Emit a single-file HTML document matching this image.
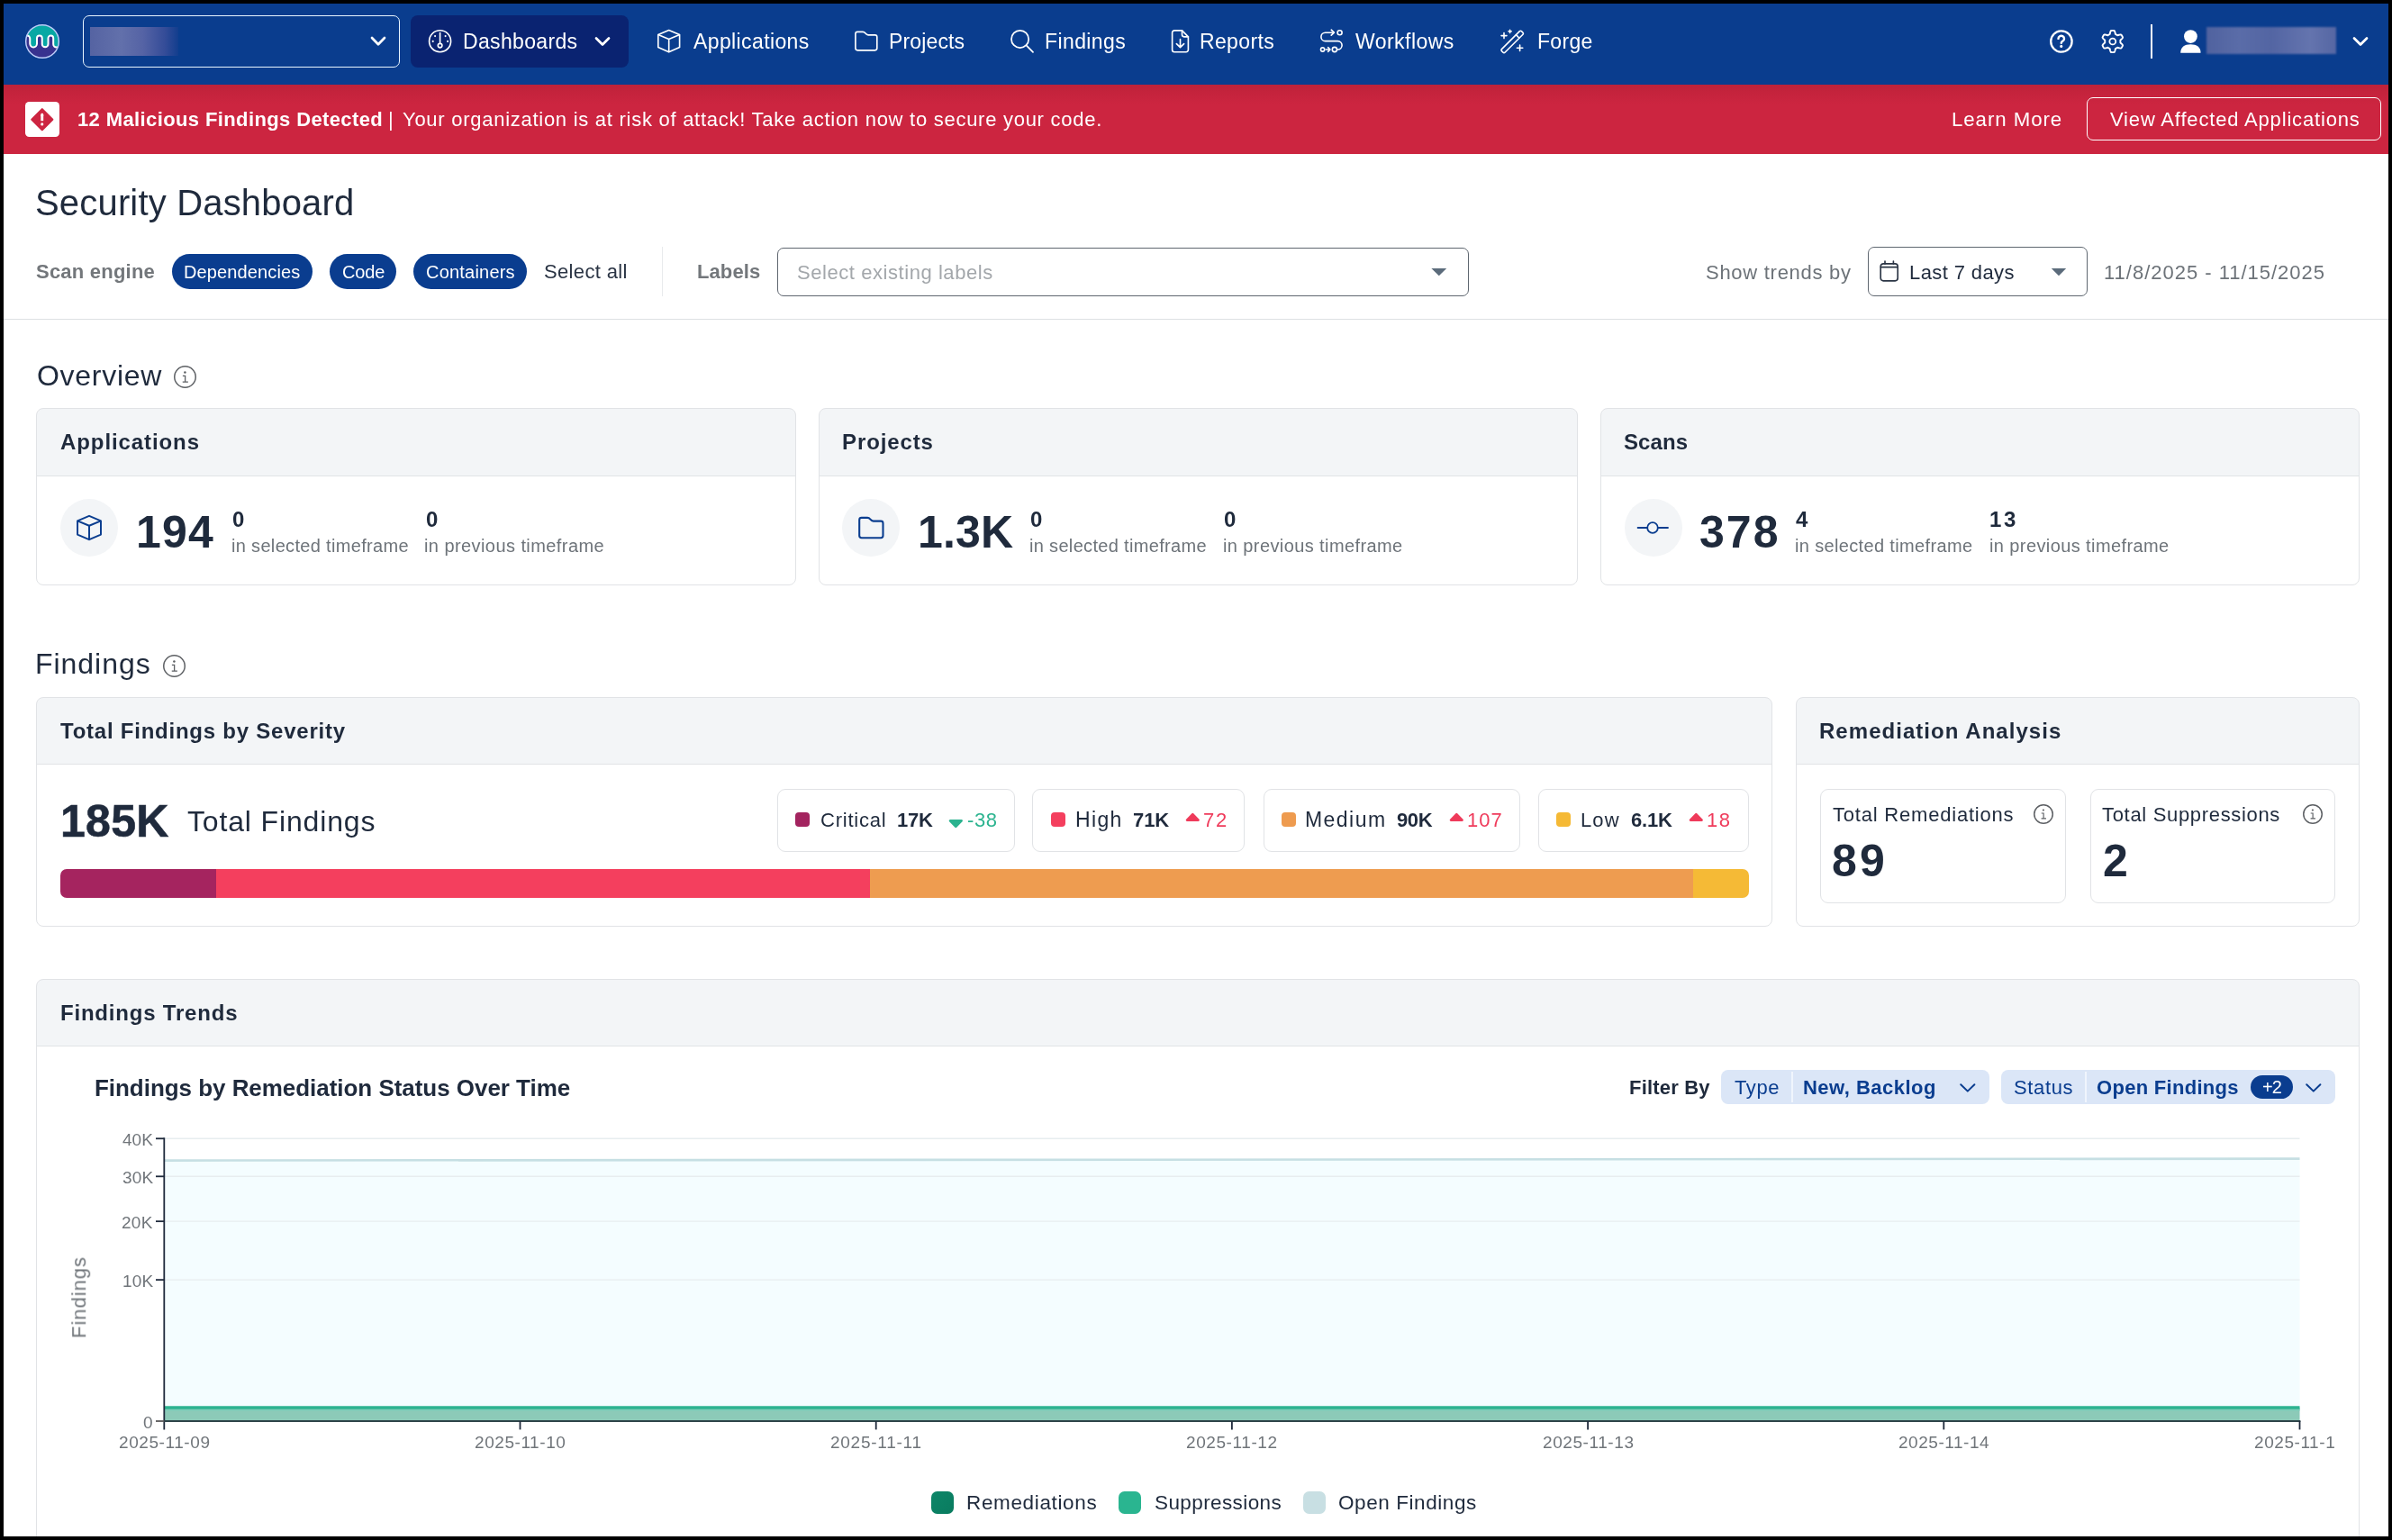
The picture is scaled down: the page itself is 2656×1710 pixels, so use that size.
<!DOCTYPE html>
<html><head><meta charset="utf-8"><title>Security Dashboard</title>
<style>
html,body{margin:0;padding:0;background:#000;}
body{width:2656px;height:1710px;overflow:hidden;position:relative;font-family:"Liberation Sans",sans-serif;}
#page{position:absolute;left:0;top:0;width:2656px;height:1710px;background:#fff;overflow:hidden;}
#frame{position:absolute;left:0;top:0;width:2656px;height:1710px;box-sizing:border-box;border:4px solid #000;z-index:50;pointer-events:none;}
.t{position:absolute;white-space:nowrap;}
.t{will-change:transform;}
.b{position:absolute;box-sizing:border-box;}
</style></head><body><div id="page">
<div class="b" style="left:0px;top:0px;width:2656px;height:94px;background:#0a3d8e;"></div>
<svg class="b" style="left:27px;top:26px;" width="40" height="40" viewBox="0 0 40 40">
<defs><clipPath id="lc"><circle cx="20" cy="20" r="18.4"/></clipPath></defs>
<circle cx="20" cy="20" r="18.4" fill="#07a8a4"/>
<g clip-path="url(#lc)">
<path id="wv" d="M-2 13.5 H3 a3.25 3.25 0 0 1 3.25 3.25 V22.6 a3.875 3.875 0 0 0 7.75 0 V16.4 a2.875 2.875 0 0 1 5.75 0 V22.9 a3.375 3.375 0 0 0 6.75 0 V16.4 a2.85 2.85 0 0 1 5.7 0 V23 a3.5 3.5 0 0 0 3.5 3.5 H42 V42 H-2 Z" fill="#38328f"/>
<path d="M-2 13.5 H3 a3.25 3.25 0 0 1 3.25 3.25 V22.6 a3.875 3.875 0 0 0 7.75 0 V16.4 a2.875 2.875 0 0 1 5.75 0 V22.9 a3.375 3.375 0 0 0 6.75 0 V16.4 a2.85 2.85 0 0 1 5.7 0 V23 a3.5 3.5 0 0 0 3.5 3.5 H42" fill="none" stroke="#fff" stroke-width="2" stroke-linecap="round"/>
</g>
<circle cx="20" cy="20" r="18.3" fill="none" stroke="#bccaf7" stroke-width="1.5"/>
</svg>
<div class="b" style="left:92px;top:17px;width:352px;height:58px;border:1.6px solid #e9f6ff;border-radius:7px;"></div>
<div class="b" style="left:100px;top:30px;width:98px;height:32px;background:linear-gradient(90deg,#5563a2 0%,#6270ab 35%,#5563a5 60%,#344c98 85%,#123e8e 100%);filter:blur(0.7px);"></div>
<svg class="b" style="left:410px;top:39px;" width="20" height="15" viewBox="0 0 20 15"><path d="M3 3 L10 10.2 L17 3" fill="none" stroke="#fff" stroke-width="2.7" stroke-linecap="round" stroke-linejoin="round"/></svg>
<div class="b" style="left:456px;top:17px;width:242px;height:58px;background:#0a2371;border-radius:8px;"></div>
<svg class="b" style="left:474px;top:31px;" width="30" height="30" viewBox="0 0 30 30"><g fill="none" stroke="#fff" stroke-width="1.65">
<circle cx="14.6" cy="14.7" r="12"/><circle cx="14.6" cy="19.6" r="2.3"/><path d="M14.6 17.2 V5.6" stroke-linecap="round"/></g>
<g fill="#fff"><circle cx="9.1" cy="9.1" r="1.05"/><circle cx="20.6" cy="9.1" r="1.05"/><circle cx="6.7" cy="14.9" r="1.05"/><circle cx="23.1" cy="14.9" r="1.05"/></g></svg>
<div class="t" style="left:513.62px;top:35.33px;font-size:23.00px;line-height:23.00px;letter-spacing:0.336px;color:#fff;">Dashboards</div>
<svg class="b" style="left:659px;top:39px;" width="20" height="15" viewBox="0 0 20 15"><path d="M3 3.5 L10 10.5 L17 3.5" fill="none" stroke="#fff" stroke-width="2.7" stroke-linecap="round" stroke-linejoin="round"/></svg>
<svg class="b" style="left:728px;top:31px;" width="30" height="30" viewBox="0 0 30 30"><g fill="none" stroke="#fff" stroke-width="1.65" stroke-linejoin="round"><path d="M14.7 2.6 L26.6 7.6 V21.6 L14.7 26.8 L2.8 21.6 V7.6 Z"/><path d="M2.8 7.6 L14.7 12.6 L26.6 7.6 M14.7 12.6 V26.8"/></g></svg>
<div class="t" style="left:769.50px;top:35.33px;font-size:23.00px;line-height:23.00px;letter-spacing:0.386px;color:#fff;">Applications</div>
<svg class="b" style="left:947px;top:31px;" width="30" height="30" viewBox="0 0 30 30"><path d="M2.9 6.6 a2.2 2.2 0 0 1 2.2 -2.2 H11 c1.6 0 2.2 0.7 3 1.7 c0.8 1 1.4 1.7 3 1.7 H24.6 a2.2 2.2 0 0 1 2.2 2.2 V22.6 a2.2 2.2 0 0 1 -2.2 2.2 H5.1 a2.2 2.2 0 0 1 -2.2 -2.2 Z" fill="none" stroke="#fff" stroke-width="1.65" stroke-linejoin="round"/></svg>
<div class="t" style="left:986.62px;top:35.33px;font-size:23.00px;line-height:23.00px;letter-spacing:0.143px;color:#fff;">Projects</div>
<svg class="b" style="left:1120px;top:31px;" width="30" height="30" viewBox="0 0 30 30"><g fill="none" stroke="#fff" stroke-width="1.75" stroke-linecap="round"><circle cx="12.6" cy="12.4" r="9.6"/><path d="M19.6 19.4 L27 26.8"/></g></svg>
<div class="t" style="left:1160.12px;top:35.33px;font-size:23.00px;line-height:23.00px;letter-spacing:0.393px;color:#fff;">Findings</div>
<svg class="b" style="left:1296px;top:31px;" width="30" height="30" viewBox="0 0 30 30"><g fill="none" stroke="#fff" stroke-width="1.65" stroke-linecap="round" stroke-linejoin="round"><path d="M16.5 2.9 H8 a2.4 2.4 0 0 0 -2.4 2.4 V24.3 a2.4 2.4 0 0 0 2.4 2.4 H21 a2.4 2.4 0 0 0 2.4 -2.4 V9.8 Z"/><path d="M16.5 2.9 V7.6 a2.2 2.2 0 0 0 2.2 2.2 H23.4"/><path d="M14.5 12.6 V21.4 M10.4 17.6 L14.5 21.6 L18.6 17.6"/></g></svg>
<div class="t" style="left:1332.12px;top:35.33px;font-size:23.00px;line-height:23.00px;letter-spacing:0.354px;color:#fff;">Reports</div>
<svg class="b" style="left:1464px;top:31px;" width="30" height="30" viewBox="0 0 30 30"><g fill="none" stroke="#fff" stroke-width="1.6" stroke-linecap="round" stroke-linejoin="round">
<path d="M16.8 5.2 H7.6 a4.7 4.7 0 0 0 0 9.4 H21.4 a4.7 4.7 0 0 1 0 9.4 H20.6"/>
<path d="M14.2 2.2 L17.4 5.2 L14.2 8.2"/>
<circle cx="23.6" cy="5.2" r="2.5"/>
<circle cx="4.6" cy="24" r="2.1"/><circle cx="17.9" cy="24" r="2.6"/>
<path d="M8.2 24 H12.6 M10.6 21.7 L13 24 L10.6 26.3"/></g></svg>
<div class="t" style="left:1505.00px;top:35.33px;font-size:23.00px;line-height:23.00px;letter-spacing:0.453px;color:#fff;">Workflows</div>
<svg class="b" style="left:1664px;top:31px;" width="30" height="30" viewBox="0 0 30 30"><g fill="none" stroke="#fff" stroke-width="1.6" stroke-linecap="round" stroke-linejoin="round">
<path d="M3.4 23.6 L23.4 3.6 a1.4 1.4 0 0 1 2 0 L27 5.2 a1.4 1.4 0 0 1 0 2 L7 27.2 a1.4 1.4 0 0 1 -2 0 L3.4 25.6 a1.4 1.4 0 0 1 0 -2 Z"/>
<path d="M19.4 7.6 L23 11.2"/>
<path d="M6 5.6 V11.6 M3 8.6 H9"/><path d="M12.6 2.2 V5.4 M11 3.8 H14.2"/>
<path d="M23.6 19 V25.4 M20.4 22.2 H26.8"/></g></svg>
<div class="t" style="left:1706.62px;top:35.33px;font-size:23.00px;line-height:23.00px;letter-spacing:0.312px;color:#fff;">Forge</div>
<svg class="b" style="left:2274px;top:31px;" width="30" height="30" viewBox="0 0 30 30"><circle cx="14.9" cy="15" r="11.7" fill="none" stroke="#fff" stroke-width="2.3"/>
<path d="M11.5 11.9 a3.25 3.1 0 1 1 5 2.6 c-1.2 0.8 -1.75 1.3 -1.75 2.3" fill="none" stroke="#fff" stroke-width="2.4" stroke-linecap="round"/><circle cx="14.75" cy="20.4" r="1.55" fill="#fff"/></svg>
<svg class="b" style="left:2331px;top:31px;" width="30" height="30" viewBox="0 0 30 30"><path d="M14.80 2.90 L15.22 2.91 L15.64 2.93 L16.06 2.97 L16.48 3.02 L16.86 3.34 L17.14 3.98 L17.38 4.66 L17.57 5.35 L17.71 6.03 L17.83 6.67 L18.02 7.03 L18.30 7.14 L18.57 7.27 L18.84 7.41 L19.10 7.55 L19.36 7.71 L19.61 7.87 L19.85 8.04 L20.09 8.22 L20.50 8.21 L21.11 7.99 L21.77 7.78 L22.47 7.59 L23.17 7.46 L23.87 7.39 L24.33 7.55 L24.59 7.89 L24.83 8.23 L25.06 8.59 L25.28 8.95 L25.48 9.32 L25.68 9.70 L25.85 10.08 L26.02 10.47 L25.92 10.95 L25.52 11.52 L25.05 12.06 L24.54 12.57 L24.02 13.04 L23.53 13.46 L23.32 13.80 L23.35 14.10 L23.38 14.40 L23.39 14.70 L23.40 15.00 L23.39 15.30 L23.38 15.60 L23.35 15.90 L23.32 16.20 L23.53 16.54 L24.02 16.96 L24.54 17.43 L25.05 17.94 L25.52 18.48 L25.92 19.05 L26.02 19.53 L25.85 19.92 L25.68 20.30 L25.48 20.68 L25.28 21.05 L25.06 21.41 L24.83 21.77 L24.59 22.11 L24.33 22.45 L23.87 22.61 L23.17 22.54 L22.47 22.41 L21.77 22.22 L21.11 22.01 L20.50 21.79 L20.09 21.78 L19.85 21.96 L19.61 22.13 L19.36 22.29 L19.10 22.45 L18.84 22.59 L18.57 22.73 L18.30 22.86 L18.02 22.97 L17.83 23.33 L17.71 23.97 L17.57 24.65 L17.38 25.34 L17.14 26.02 L16.86 26.66 L16.48 26.98 L16.06 27.03 L15.64 27.07 L15.22 27.09 L14.80 27.10 L14.38 27.09 L13.96 27.07 L13.54 27.03 L13.12 26.98 L12.74 26.66 L12.46 26.02 L12.22 25.34 L12.03 24.65 L11.89 23.97 L11.77 23.33 L11.58 22.97 L11.30 22.86 L11.03 22.73 L10.76 22.59 L10.50 22.45 L10.24 22.29 L9.99 22.13 L9.75 21.96 L9.51 21.78 L9.10 21.79 L8.49 22.01 L7.83 22.22 L7.13 22.41 L6.43 22.54 L5.73 22.61 L5.27 22.45 L5.01 22.11 L4.77 21.77 L4.54 21.41 L4.32 21.05 L4.12 20.68 L3.92 20.30 L3.75 19.92 L3.58 19.53 L3.68 19.05 L4.08 18.48 L4.55 17.94 L5.06 17.43 L5.58 16.96 L6.07 16.54 L6.28 16.20 L6.25 15.90 L6.22 15.60 L6.21 15.30 L6.20 15.00 L6.21 14.70 L6.22 14.40 L6.25 14.10 L6.28 13.80 L6.07 13.46 L5.58 13.04 L5.06 12.57 L4.55 12.06 L4.08 11.52 L3.68 10.95 L3.58 10.47 L3.75 10.08 L3.92 9.70 L4.12 9.32 L4.32 8.95 L4.54 8.59 L4.77 8.23 L5.01 7.89 L5.27 7.55 L5.73 7.39 L6.43 7.46 L7.13 7.59 L7.83 7.78 L8.49 7.99 L9.10 8.21 L9.51 8.22 L9.75 8.04 L9.99 7.87 L10.24 7.71 L10.50 7.55 L10.76 7.41 L11.03 7.27 L11.30 7.14 L11.58 7.03 L11.77 6.67 L11.89 6.03 L12.03 5.35 L12.22 4.66 L12.46 3.98 L12.74 3.34 L13.12 3.02 L13.54 2.97 L13.96 2.93 L14.38 2.91 Z" fill="none" stroke="#fff" stroke-width="1.9" stroke-linejoin="round"/><circle cx="14.8" cy="15" r="3.45" fill="none" stroke="#fff" stroke-width="1.8"/></svg>
<div class="b" style="left:2387.5px;top:27px;width:2px;height:38px;background:#fff;"></div>
<svg class="b" style="left:2419px;top:31px;" width="28" height="30" viewBox="0 0 28 30"><circle cx="13.4" cy="9.6" r="7.4" fill="#fff"/><path d="M2.2 27.8 c0 -6.6 4.4 -9.6 11.2 -9.6 s11.2 3 11.2 9.6 Z" fill="#fff"/></svg>
<div class="b" style="left:2450px;top:30px;width:144px;height:30px;background:linear-gradient(90deg,#50629f 0%,#5a6ca8 25%,#5365a3 50%,#6474ae 80%,#5566a3 100%);filter:blur(1.2px);"></div>
<svg class="b" style="left:2611px;top:39px;" width="20" height="15" viewBox="0 0 20 15"><path d="M3 3.5 L10 10.5 L17 3.5" fill="none" stroke="#fff" stroke-width="2.7" stroke-linecap="round" stroke-linejoin="round"/></svg>
<div class="b" style="left:0px;top:94px;width:2656px;height:77px;background:linear-gradient(180deg,#bd2239 0px,#c4233c 8px,#cc2540 22px,#cc2540 100%);"></div>
<div class="b" style="left:28px;top:112.8px;width:38.2px;height:39.4px;background:#fff;border-radius:4.5px;"></div>
<svg class="b" style="left:28px;top:113px;" width="38" height="39" viewBox="0 0 38 39"><path d="M18.8 8.2 L30.3 19.7 L18.8 31.2 L7.3 19.7 Z" fill="#cd2541" stroke="#cd2541" stroke-width="2.2" stroke-linejoin="round"/><path d="M18.75 14.8 V21.2" stroke="#fff" stroke-width="2.9" stroke-linecap="butt"/><path d="M18.75 14.3 V15.2" stroke="#fff" stroke-width="2.9" stroke-linecap="round"/><circle cx="18.75" cy="24.9" r="1.55" fill="#fff"/></svg>
<div class="t" style="left:85.62px;top:122.28px;font-size:22.00px;line-height:22.00px;letter-spacing:0.384px;color:#fff;font-weight:700;">12 Malicious Findings Detected</div>
<div class="t" style="left:430.62px;top:122.28px;font-size:22.00px;line-height:22.00px;letter-spacing:0.000px;color:#fff;">|</div>
<div class="t" style="left:447.12px;top:122.28px;font-size:22.00px;line-height:22.00px;letter-spacing:0.730px;color:#fff;">Your organization is at risk of attack! Take action now to secure your code.</div>
<div class="t" style="left:2166.75px;top:122.07px;font-size:22.25px;line-height:22.25px;letter-spacing:0.931px;color:#fff;">Learn More</div>
<div class="b" style="left:2317px;top:108px;width:327px;height:48px;border:1.6px solid #fff;border-radius:7px;"></div>
<div class="t" style="left:2343.00px;top:122.28px;font-size:22.00px;line-height:22.00px;letter-spacing:0.830px;color:#fff;">View Affected Applications</div>
<div class="t" style="left:39.25px;top:204.54px;font-size:40.00px;line-height:40.00px;letter-spacing:0.176px;color:#1f2a3c;">Security Dashboard</div>
<div class="t" style="left:40.38px;top:291.28px;font-size:22.00px;line-height:22.00px;letter-spacing:0.225px;color:#73777b;font-weight:700;">Scan engine</div>
<div class="b" style="left:191px;top:282px;width:156px;height:39px;background:#0a3d8f;border-radius:20px;"></div>
<div class="t" style="left:203.88px;top:291.97px;font-size:20.00px;line-height:20.00px;letter-spacing:0.125px;color:#fff;">Dependencies</div>
<div class="b" style="left:366px;top:282px;width:74px;height:39px;background:#0a3d8f;border-radius:20px;"></div>
<div class="t" style="left:379.50px;top:291.97px;font-size:20.00px;line-height:20.00px;letter-spacing:-0.167px;color:#fff;">Code</div>
<div class="b" style="left:459px;top:282px;width:126px;height:39px;background:#0a3d8f;border-radius:20px;"></div>
<div class="t" style="left:473.00px;top:291.97px;font-size:20.00px;line-height:20.00px;letter-spacing:0.208px;color:#fff;">Containers</div>
<div class="t" style="left:604.00px;top:291.28px;font-size:22.00px;line-height:22.00px;letter-spacing:0.347px;color:#2a3444;">Select all</div>
<div class="b" style="left:735px;top:274px;width:1.3px;height:55px;background:#e8eaec;"></div>
<div class="t" style="left:773.62px;top:291.28px;font-size:22.00px;line-height:22.00px;letter-spacing:0.100px;color:#73777b;font-weight:700;">Labels</div>
<div class="b" style="left:863px;top:275px;width:768px;height:54px;border:1.5px solid #5f6770;border-radius:7px;background:#fff;"></div>
<div class="t" style="left:885.00px;top:292.28px;font-size:22.00px;line-height:22.00px;letter-spacing:0.560px;color:#a3a7ab;">Select existing labels</div>
<svg class="b" style="left:1588px;top:297px;" width="20" height="10" viewBox="0 0 20 10"><path d="M1.4 1 H18.2 L9.8 9.2 Z" fill="#5b6b7b"/></svg>
<div class="t" style="left:1893.75px;top:291.53px;font-size:22.00px;line-height:22.00px;letter-spacing:0.721px;color:#6d7379;">Show trends by</div>
<div class="b" style="left:2074px;top:274px;width:244px;height:55px;border:1.5px solid #5f6770;border-radius:7px;background:#fff;"></div>
<svg class="b" style="left:2086px;top:288px;" width="24" height="26" viewBox="0 0 24 26"><g fill="none" stroke="#2a3444" stroke-width="1.65" stroke-linecap="round"><rect x="2.2" y="4.8" width="19" height="19" rx="3"/><path d="M2.4 8.6 H21"/><path d="M7 2 V5 M16.4 2 V5"/></g></svg>
<div class="t" style="left:2120.25px;top:291.53px;font-size:22.00px;line-height:22.00px;letter-spacing:0.400px;color:#1f2a3c;">Last 7 days</div>
<svg class="b" style="left:2277px;top:297px;" width="20" height="10" viewBox="0 0 20 10"><path d="M0.8 1 H17.2 L9 9.2 Z" fill="#5b6b7b"/></svg>
<div class="t" style="left:2336.38px;top:291.53px;font-size:22.00px;line-height:22.00px;letter-spacing:0.988px;color:#6d7379;">11/8/2025 - 11/15/2025</div>
<div class="b" style="left:4px;top:354px;width:2648px;height:1.4px;background:#dde0e3;"></div>
<div class="t" style="left:40.50px;top:401.31px;font-size:32.00px;line-height:32.00px;letter-spacing:0.714px;color:#1f2a3c;">Overview</div>
<svg class="b" style="left:191.25px;top:404.3px;" width="29.0" height="29.0" viewBox="0 0 29.0 29.0"><circle cx="14.5" cy="14.5" r="11.75" fill="none" stroke="#5d6064" stroke-width="1.5"/>
<circle cx="14.38" cy="9.38" r="1.25" fill="#5d6064"/>
<path d="M11.88 13.38 H14.62 V20.12 M11.75 20.12 H17.88" fill="none" stroke="#5d6064" stroke-width="1.31"/></svg>
<div class="b" style="left:40px;top:453px;width:844px;height:196.5px;border:1.6px solid #e1e3e6;border-radius:8px;background:linear-gradient(180deg,#f3f5f7 0px,#f3f5f7 73.60000000000001px,#e1e3e6 73.60000000000001px,#e1e3e6 75.2px,#fff 75.2px,#fff 100%);"></div>
<div class="t" style="left:67.00px;top:479.33px;font-size:24.00px;line-height:24.00px;letter-spacing:0.909px;color:#1f2a3c;font-weight:700;">Applications</div>
<div class="b" style="left:67px;top:554px;width:64px;height:64px;background:#f3f5f7;border-radius:32px;"></div>
<svg class="b" style="left:82.98px;top:569.73px;" width="32.7" height="32.7" viewBox="0 0 30 30"><g fill="none" stroke="#0a3d8f" stroke-width="1.8" stroke-linejoin="round"><path d="M14.7 2.6 L26.6 7.6 V21.6 L14.7 26.8 L2.8 21.6 V7.6 Z"/><path d="M2.8 7.6 L14.7 12.6 L26.6 7.6 M14.7 12.6 V26.8"/></g></svg>
<div class="t" style="left:150.62px;top:566.07px;font-size:50.00px;line-height:50.00px;letter-spacing:1.188px;color:#1f2a3c;font-weight:700;">194</div>
<div class="t" style="left:257.88px;top:564.83px;font-size:24.00px;line-height:24.00px;letter-spacing:0.000px;color:#1f2a3c;font-weight:700;">0</div>
<div class="t" style="left:256.75px;top:596.47px;font-size:20.00px;line-height:20.00px;letter-spacing:0.325px;color:#6d7379;">in selected timeframe</div>
<div class="t" style="left:472.62px;top:564.83px;font-size:24.00px;line-height:24.00px;letter-spacing:0.000px;color:#1f2a3c;font-weight:700;">0</div>
<div class="t" style="left:471.25px;top:596.47px;font-size:20.00px;line-height:20.00px;letter-spacing:0.425px;color:#6d7379;">in previous timeframe</div>
<div class="b" style="left:908.5px;top:453px;width:843px;height:196.5px;border:1.6px solid #e1e3e6;border-radius:8px;background:linear-gradient(180deg,#f3f5f7 0px,#f3f5f7 73.60000000000001px,#e1e3e6 73.60000000000001px,#e1e3e6 75.2px,#fff 75.2px,#fff 100%);"></div>
<div class="t" style="left:934.50px;top:479.33px;font-size:24.00px;line-height:24.00px;letter-spacing:0.893px;color:#1f2a3c;font-weight:700;">Projects</div>
<div class="b" style="left:935px;top:554px;width:64px;height:64px;background:#f3f5f7;border-radius:32px;"></div>
<svg class="b" style="left:950.66px;top:569.84px;" width="33" height="33" viewBox="0 0 30 30"><path d="M2.9 6.6 a2.2 2.2 0 0 1 2.2 -2.2 H11 c1.6 0 2.2 0.7 3 1.7 c0.8 1 1.4 1.7 3 1.7 H24.6 a2.2 2.2 0 0 1 2.2 2.2 V22.6 a2.2 2.2 0 0 1 -2.2 2.2 H5.1 a2.2 2.2 0 0 1 -2.2 -2.2 Z" fill="none" stroke="#0a3d8f" stroke-width="1.9" stroke-linejoin="round"/></svg>
<div class="t" style="left:1018.62px;top:566.07px;font-size:50.00px;line-height:50.00px;letter-spacing:0.125px;color:#1f2a3c;font-weight:700;">1.3K</div>
<div class="t" style="left:1144.12px;top:564.83px;font-size:24.00px;line-height:24.00px;letter-spacing:0.000px;color:#1f2a3c;font-weight:700;">0</div>
<div class="t" style="left:1143.00px;top:596.47px;font-size:20.00px;line-height:20.00px;letter-spacing:0.325px;color:#6d7379;">in selected timeframe</div>
<div class="t" style="left:1358.88px;top:564.83px;font-size:24.00px;line-height:24.00px;letter-spacing:0.000px;color:#1f2a3c;font-weight:700;">0</div>
<div class="t" style="left:1357.75px;top:596.47px;font-size:20.00px;line-height:20.00px;letter-spacing:0.400px;color:#6d7379;">in previous timeframe</div>
<div class="b" style="left:1776.5px;top:453px;width:843.5px;height:196.5px;border:1.6px solid #e1e3e6;border-radius:8px;background:linear-gradient(180deg,#f3f5f7 0px,#f3f5f7 73.60000000000001px,#e1e3e6 73.60000000000001px,#e1e3e6 75.2px,#fff 75.2px,#fff 100%);"></div>
<div class="t" style="left:1803.38px;top:479.33px;font-size:24.00px;line-height:24.00px;letter-spacing:0.094px;color:#1f2a3c;font-weight:700;">Scans</div>
<div class="b" style="left:1803.6px;top:554px;width:64px;height:64px;background:#f3f5f7;border-radius:32px;"></div>
<svg class="b" style="left:1817.3px;top:570.8px;" width="36" height="30" viewBox="0 0 36 30"><g fill="none" stroke="#0a3d8f" stroke-width="1.8" stroke-linecap="round"><circle cx="18" cy="15" r="5.8"/><path d="M1.6 15 H12 M24 15 H35"/></g></svg>
<div class="t" style="left:1886.88px;top:566.07px;font-size:50.00px;line-height:50.00px;letter-spacing:2.062px;color:#1f2a3c;font-weight:700;">378</div>
<div class="t" style="left:1994.12px;top:564.83px;font-size:24.00px;line-height:24.00px;letter-spacing:0.000px;color:#1f2a3c;font-weight:700;">4</div>
<div class="t" style="left:1992.50px;top:596.47px;font-size:20.00px;line-height:20.00px;letter-spacing:0.350px;color:#6d7379;">in selected timeframe</div>
<div class="t" style="left:2208.50px;top:564.83px;font-size:24.00px;line-height:24.00px;letter-spacing:2.625px;color:#1f2a3c;font-weight:700;">13</div>
<div class="t" style="left:2208.75px;top:596.47px;font-size:20.00px;line-height:20.00px;letter-spacing:0.400px;color:#6d7379;">in previous timeframe</div>
<div class="t" style="left:39.38px;top:721.31px;font-size:32.00px;line-height:32.00px;letter-spacing:0.964px;color:#1f2a3c;">Findings</div>
<svg class="b" style="left:179.3px;top:725.0px;" width="29.0" height="29.0" viewBox="0 0 29.0 29.0"><circle cx="14.5" cy="14.5" r="11.75" fill="none" stroke="#5d6064" stroke-width="1.5"/>
<circle cx="14.38" cy="9.38" r="1.25" fill="#5d6064"/>
<path d="M11.88 13.38 H14.62 V20.12 M11.75 20.12 H17.88" fill="none" stroke="#5d6064" stroke-width="1.31"/></svg>
<div class="b" style="left:40px;top:774px;width:1927.5px;height:254.5px;border:1.6px solid #e1e3e6;border-radius:8px;background:linear-gradient(180deg,#f3f5f7 0px,#f3f5f7 72.60000000000001px,#e1e3e6 72.60000000000001px,#e1e3e6 74.2px,#fff 74.2px,#fff 100%);"></div>
<div class="t" style="left:67.25px;top:800.33px;font-size:24.00px;line-height:24.00px;letter-spacing:0.765px;color:#1f2a3c;font-weight:700;">Total Findings by Severity</div>
<div class="t" style="left:67.28px;top:886.82px;font-size:50.00px;line-height:50.00px;letter-spacing:0.267px;color:#1f2a3c;font-weight:700;-webkit-text-stroke:0.6px #1f2a3c;">185K</div>
<div class="t" style="left:207.62px;top:896.31px;font-size:32.00px;line-height:32.00px;letter-spacing:0.846px;color:#1f2a3c;">Total Findings</div>
<div class="b" style="left:862.5px;top:875.5px;width:264.25px;height:70.5px;border:1.6px solid #e1e3e6;border-radius:9px;background:#fff;"></div>
<div class="b" style="left:882.8px;top:902px;width:16px;height:16px;background:#a3245f;border-radius:4px;"></div>
<div class="t" style="left:910.75px;top:899.78px;font-size:22.00px;line-height:22.00px;letter-spacing:0.768px;color:#1f2a3c;">Critical</div>
<div class="t" style="left:995.62px;top:899.78px;font-size:22.00px;line-height:22.00px;letter-spacing:-0.188px;color:#1f2a3c;font-weight:700;">17K</div>
<svg class="b" style="left:1052.25px;top:909px;" width="19" height="12" viewBox="0 0 19 12"><path d="M3 2.4 H15.6 L9.3 8.9 Z" fill="#2bb38f" stroke="#2bb38f" stroke-width="2.6" stroke-linejoin="round"/></svg>
<div class="t" style="left:1073.62px;top:899.78px;font-size:22.00px;line-height:22.00px;letter-spacing:0.562px;color:#2bb38f;">-38</div>
<div class="b" style="left:1146.25px;top:875.5px;width:235.5px;height:70.5px;border:1.6px solid #e1e3e6;border-radius:9px;background:#fff;"></div>
<div class="b" style="left:1166.55px;top:902px;width:16px;height:16px;background:#f43f5e;border-radius:4px;"></div>
<div class="t" style="left:1194.38px;top:898.93px;font-size:23.00px;line-height:23.00px;letter-spacing:1.333px;color:#1f2a3c;">High</div>
<div class="t" style="left:1257.88px;top:899.78px;font-size:22.00px;line-height:22.00px;letter-spacing:-0.062px;color:#1f2a3c;font-weight:700;">71K</div>
<svg class="b" style="left:1314.75px;top:901px;" width="19" height="12" viewBox="0 0 19 12"><path d="M3 9.6 H15.6 L9.3 3.1 Z" fill="#ef3b5b" stroke="#ef3b5b" stroke-width="2.6" stroke-linejoin="round"/></svg>
<div class="t" style="left:1335.88px;top:899.78px;font-size:22.00px;line-height:22.00px;letter-spacing:1.875px;color:#ef3b5b;">72</div>
<div class="b" style="left:1402.5px;top:875.5px;width:285px;height:70.5px;border:1.6px solid #e1e3e6;border-radius:9px;background:#fff;"></div>
<div class="b" style="left:1422.8px;top:902px;width:16px;height:16px;background:#ee9b4f;border-radius:4px;"></div>
<div class="t" style="left:1449.38px;top:898.93px;font-size:23.00px;line-height:23.00px;letter-spacing:1.450px;color:#1f2a3c;">Medium</div>
<div class="t" style="left:1551.00px;top:899.78px;font-size:22.00px;line-height:22.00px;letter-spacing:-0.375px;color:#1f2a3c;font-weight:700;">90K</div>
<svg class="b" style="left:1607.75px;top:901px;" width="19" height="12" viewBox="0 0 19 12"><path d="M3 9.6 H15.6 L9.3 3.1 Z" fill="#ef3b5b" stroke="#ef3b5b" stroke-width="2.6" stroke-linejoin="round"/></svg>
<div class="t" style="left:1628.88px;top:899.78px;font-size:22.00px;line-height:22.00px;letter-spacing:1.062px;color:#ef3b5b;">107</div>
<div class="b" style="left:1707.5px;top:875.5px;width:234.25px;height:70.5px;border:1.6px solid #e1e3e6;border-radius:9px;background:#fff;"></div>
<div class="b" style="left:1727.8px;top:902px;width:16px;height:16px;background:#f5b935;border-radius:4px;"></div>
<div class="t" style="left:1755.25px;top:899.78px;font-size:22.00px;line-height:22.00px;letter-spacing:1.125px;color:#1f2a3c;">Low</div>
<div class="t" style="left:1811.25px;top:899.78px;font-size:22.00px;line-height:22.00px;letter-spacing:-0.208px;color:#1f2a3c;font-weight:700;">6.1K</div>
<svg class="b" style="left:1873.5px;top:901px;" width="19" height="12" viewBox="0 0 19 12"><path d="M3 9.6 H15.6 L9.3 3.1 Z" fill="#ef3b5b" stroke="#ef3b5b" stroke-width="2.6" stroke-linejoin="round"/></svg>
<div class="t" style="left:1895.38px;top:899.78px;font-size:22.00px;line-height:22.00px;letter-spacing:1.500px;color:#ef3b5b;">18</div>
<div class="b" style="left:67px;top:965px;width:1875px;height:32px;border-radius:7px;background:linear-gradient(90deg,#a5245f 0px,#a5245f 173px,#f43f5e 173px,#f43f5e 899px,#ee9c50 899px,#ee9c50 1813px,#f5ba36 1813px,#f5ba36 100%);"></div>
<div class="b" style="left:1994px;top:774px;width:626px;height:254.5px;border:1.6px solid #e1e3e6;border-radius:8px;background:linear-gradient(180deg,#f3f5f7 0px,#f3f5f7 72.60000000000001px,#e1e3e6 72.60000000000001px,#e1e3e6 74.2px,#fff 74.2px,#fff 100%);"></div>
<div class="t" style="left:2020.00px;top:800.33px;font-size:24.00px;line-height:24.00px;letter-spacing:1.039px;color:#1f2a3c;font-weight:700;">Remediation Analysis</div>
<div class="b" style="left:2021.25px;top:875.5px;width:272.5px;height:127px;border:1.6px solid #e1e3e6;border-radius:9px;background:#fff;"></div>
<div class="t" style="left:2034.62px;top:894.28px;font-size:22.00px;line-height:22.00px;letter-spacing:0.794px;color:#1f2a3c;">Total Remediations</div>
<svg class="b" style="left:2256px;top:891px;" width="26" height="26" viewBox="0 0 26 26"><circle cx="13" cy="13" r="10.25" fill="none" stroke="#5d6064" stroke-width="1.5"/>
<circle cx="12.89" cy="8.49" r="1.10" fill="#5d6064"/>
<path d="M10.69 12.01 H13.11 V17.95 M10.58 17.95 H15.97" fill="none" stroke="#5d6064" stroke-width="1.16"/></svg>
<div class="t" style="left:2034.25px;top:931.07px;font-size:50.00px;line-height:50.00px;letter-spacing:3.250px;color:#1f2a3c;font-weight:700;">89</div>
<div class="b" style="left:2320.5px;top:875.5px;width:272.5px;height:127px;border:1.6px solid #e1e3e6;border-radius:9px;background:#fff;"></div>
<div class="t" style="left:2333.88px;top:894.28px;font-size:22.00px;line-height:22.00px;letter-spacing:0.676px;color:#1f2a3c;">Total Suppressions</div>
<svg class="b" style="left:2555.2px;top:891px;" width="26" height="26" viewBox="0 0 26 26"><circle cx="13" cy="13" r="10.25" fill="none" stroke="#5d6064" stroke-width="1.5"/>
<circle cx="12.89" cy="8.49" r="1.10" fill="#5d6064"/>
<path d="M10.69 12.01 H13.11 V17.95 M10.58 17.95 H15.97" fill="none" stroke="#5d6064" stroke-width="1.16"/></svg>
<div class="t" style="left:2334.50px;top:931.07px;font-size:50.00px;line-height:50.00px;letter-spacing:0.000px;color:#1f2a3c;font-weight:700;">2</div>
<div class="b" style="left:40px;top:1087px;width:2580px;height:700px;border:1.6px solid #e1e3e6;border-radius:8px;background:linear-gradient(180deg,#f3f5f7 0px,#f3f5f7 72.60000000000001px,#e1e3e6 72.60000000000001px,#e1e3e6 74.2px,#fff 74.2px,#fff 100%);"></div>
<div class="t" style="left:66.50px;top:1113.33px;font-size:24.00px;line-height:24.00px;letter-spacing:0.795px;color:#1f2a3c;font-weight:700;">Findings Trends</div>
<div class="t" style="left:105.38px;top:1195.14px;font-size:26.00px;line-height:26.00px;letter-spacing:-0.040px;color:#1f2a3c;font-weight:700;">Findings by Remediation Status Over Time</div>
<div class="t" style="left:1808.62px;top:1197.28px;font-size:22.00px;line-height:22.00px;letter-spacing:0.188px;color:#1f2a3c;font-weight:700;">Filter By</div>
<div class="b" style="left:1911.25px;top:1188px;width:297.5px;height:37.75px;background:#dbe6f7;border-radius:8px;"></div>
<div class="t" style="left:1926.38px;top:1197.28px;font-size:22.00px;line-height:22.00px;letter-spacing:0.583px;color:#0a3d8f;">Type</div>
<div class="b" style="left:1989px;top:1190px;width:1.5px;height:34px;background:#f0f5fd;"></div>
<div class="t" style="left:2002.38px;top:1197.28px;font-size:22.00px;line-height:22.00px;letter-spacing:0.466px;color:#0a3d8f;font-weight:700;">New, Backlog</div>
<svg class="b" style="left:2175px;top:1202px;" width="20" height="12" viewBox="0 0 20 12"><path d="M2.2 2.2 L9.8 9.6 L17.4 2.2" fill="none" stroke="#0a3d8f" stroke-width="2" stroke-linecap="round" stroke-linejoin="round"/></svg>
<div class="b" style="left:2221.75px;top:1188px;width:371.25px;height:37.75px;background:#dbe6f7;border-radius:8px;"></div>
<div class="t" style="left:2236.25px;top:1197.28px;font-size:22.00px;line-height:22.00px;letter-spacing:0.625px;color:#0a3d8f;">Status</div>
<div class="b" style="left:2315px;top:1190px;width:1.5px;height:34px;background:#f0f5fd;"></div>
<div class="t" style="left:2328.38px;top:1197.28px;font-size:22.00px;line-height:22.00px;letter-spacing:0.292px;color:#0a3d8f;font-weight:700;">Open Findings</div>
<div class="b" style="left:2499.25px;top:1193.75px;width:46.75px;height:26.25px;background:#0a3d8f;border-radius:14px;"></div>
<div class="t" style="left:2511.62px;top:1197.47px;font-size:20.00px;line-height:20.00px;letter-spacing:-0.875px;color:#fff;">+2</div>
<svg class="b" style="left:2558.5px;top:1202px;" width="20" height="12" viewBox="0 0 20 12"><path d="M2.2 2.2 L9.8 9.6 L17.4 2.2" fill="none" stroke="#0a3d8f" stroke-width="2" stroke-linecap="round" stroke-linejoin="round"/></svg>
<svg class="b" style="left:0;top:0" width="2656" height="1710" viewBox="0 0 2656 1710"><path d="M182.3 1288.6 L2553.5 1286.6 V1578.0 H182.3 Z" fill="#f4fdff"/><path d="M182.3 1264.25 H2553.5" stroke="#e7edef" stroke-width="1.4"/><path d="M182.3 1306.28 H2553.5" stroke="#e7edef" stroke-width="1.4"/><path d="M182.3 1356.15 H2553.5" stroke="#e7edef" stroke-width="1.4"/><path d="M182.3 1421.12 H2553.5" stroke="#e7edef" stroke-width="1.4"/><path d="M182.3 1288.6 L2553.5 1286.6" stroke="#c6dfe3" stroke-width="2.6" fill="none"/><rect x="182.3" y="1563" width="2371.2" height="15" fill="#8ccab8"/><rect x="182.3" y="1564.6" width="2371.2" height="2" fill="#7fcdb9"/><path d="M182.3 1563.1 H2553.5" stroke="#2db391" stroke-width="3.5"/><path d="M182.3 1263.35 V1587.4" stroke="#1f2a3c" stroke-width="1.8"/><path d="M182.3 1578.0 H2554.4" stroke="#2d4449" stroke-width="2.1"/><path d="M173 1264.25 H182.3" stroke="#1f2a3c" stroke-width="1.8"/><path d="M173 1306.28 H182.3" stroke="#1f2a3c" stroke-width="1.8"/><path d="M173 1356.15 H182.3" stroke="#1f2a3c" stroke-width="1.8"/><path d="M173 1421.12 H182.3" stroke="#1f2a3c" stroke-width="1.8"/><path d="M173 1578.0 H182.3" stroke="#5a5758" stroke-width="1.8"/><path d="M577.50 1578.0 V1587.4" stroke="#1f2a3c" stroke-width="1.8"/><path d="M972.70 1578.0 V1587.4" stroke="#1f2a3c" stroke-width="1.8"/><path d="M1367.90 1578.0 V1587.4" stroke="#1f2a3c" stroke-width="1.8"/><path d="M1763.10 1578.0 V1587.4" stroke="#1f2a3c" stroke-width="1.8"/><path d="M2158.30 1578.0 V1587.4" stroke="#1f2a3c" stroke-width="1.8"/><path d="M2553.50 1578.0 V1587.4" stroke="#1f2a3c" stroke-width="1.8"/></svg>
<div class="t" style="left:135.88px;top:1256.37px;font-size:19.00px;line-height:19.00px;letter-spacing:0.000px;color:#70757a;">40K</div>
<div class="t" style="left:135.62px;top:1298.40px;font-size:19.00px;line-height:19.00px;letter-spacing:0.125px;color:#70757a;">30K</div>
<div class="t" style="left:135.38px;top:1348.26px;font-size:19.00px;line-height:19.00px;letter-spacing:0.250px;color:#70757a;">20K</div>
<div class="t" style="left:135.62px;top:1413.24px;font-size:19.00px;line-height:19.00px;letter-spacing:0.125px;color:#70757a;">10K</div>
<div class="t" style="left:158.95px;top:1570.22px;font-size:19.00px;line-height:19.00px;letter-spacing:0.000px;color:#70757a;">0</div>
<div class="t" style="left:131.78px;top:1592.42px;font-size:19.00px;line-height:19.00px;letter-spacing:0.575px;color:#70757a;">2025-11-09</div>
<div class="t" style="left:526.98px;top:1592.42px;font-size:19.00px;line-height:19.00px;letter-spacing:0.561px;color:#70757a;">2025-11-10</div>
<div class="t" style="left:922.18px;top:1592.42px;font-size:19.00px;line-height:19.00px;letter-spacing:0.742px;color:#70757a;">2025-11-11</div>
<div class="t" style="left:1317.37px;top:1592.42px;font-size:19.00px;line-height:19.00px;letter-spacing:0.589px;color:#70757a;">2025-11-12</div>
<div class="t" style="left:1712.57px;top:1592.42px;font-size:19.00px;line-height:19.00px;letter-spacing:0.575px;color:#70757a;">2025-11-13</div>
<div class="t" style="left:2107.78px;top:1592.42px;font-size:19.00px;line-height:19.00px;letter-spacing:0.533px;color:#70757a;">2025-11-14</div>
<div class="t" style="left:2502.97px;top:1592.42px;font-size:19.00px;line-height:19.00px;letter-spacing:0.561px;color:#70757a;">2025-11-15</div>
<div class="t" style="left:0;top:0;width:0;height:0;transform:translate(88.2px,1440.5px) rotate(-90deg);"><div class="t" style="left:-60px;top:-14px;width:120px;text-align:center;font-size:22px;line-height:28px;letter-spacing:0.95px;color:#70757a;">Findings</div></div>
<div class="b" style="left:1034.3px;top:1656px;width:25.2px;height:25.2px;background:linear-gradient(135deg,#0c8668,#0a7b5f);border-radius:6.5px;"></div>
<div class="t" style="left:1073.45px;top:1657.85px;font-size:22.50px;line-height:22.50px;letter-spacing:0.643px;color:#1f2a3c;">Remediations</div>
<div class="b" style="left:1242.3px;top:1656px;width:25.2px;height:25.2px;background:#2ab590;border-radius:6.5px;"></div>
<div class="t" style="left:1282.00px;top:1657.85px;font-size:22.50px;line-height:22.50px;letter-spacing:0.398px;color:#1f2a3c;">Suppressions</div>
<div class="b" style="left:1446.9px;top:1656px;width:25.2px;height:25.2px;background:#c8dfe3;border-radius:6.5px;"></div>
<div class="t" style="left:1486.30px;top:1657.85px;font-size:22.50px;line-height:22.50px;letter-spacing:0.581px;color:#1f2a3c;">Open Findings</div>
<div class="b" style="left:2592.5px;top:1590px;width:26px;height:30px;background:#fff;"></div>
<div id="frame"></div></div></body></html>
